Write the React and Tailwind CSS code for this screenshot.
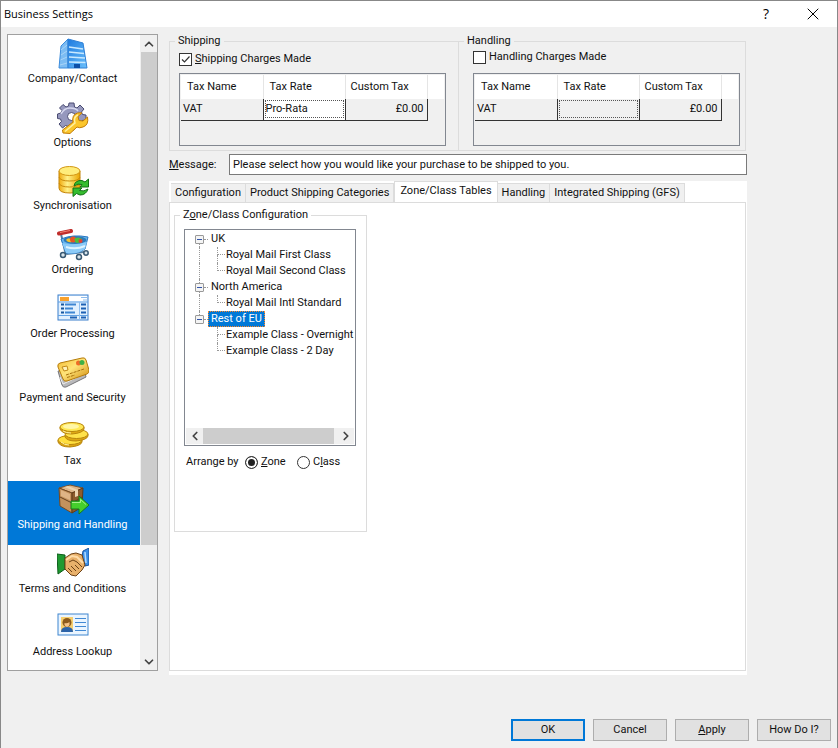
import React, { useState } from 'react';
import { X, ChevronUp, ChevronDown, ChevronLeft, ChevronRight } from 'lucide-react';

const BuildingIcon = () => (
  <svg viewBox="0 0 32 32" className="w-8 h-8">
    <defs>
      <linearGradient id="bldFront" x1="0" y1="0" x2="1" y2="1">
        <stop offset="0" stopColor="#1f7be0" />
        <stop offset="1" stopColor="#6cc0fb" />
      </linearGradient>
    </defs>
    <path d="M2 30 L4 8 L11 1 L11 30 Z" fill="#7cbcf3" stroke="#3d8ddd" strokeWidth="1" />
    <path d="M11 1 L26 5 L30 30 L11 30 Z" fill="url(#bldFront)" stroke="#2f80d6" strokeWidth="1" />
    <path d="M12 9 L26 11 M12 14 L27 15.500 M12 19 L28 20 M12 24 L28.500 24.500" stroke="#c9e9ff" strokeWidth="1.500" />
    <path d="M4 12 L10 7 M4 17 L10 13 M3.500 22 L10 19 M3 27 L10 25" stroke="#a9d4f8" strokeWidth="1" />
    <rect x="17" y="26" width="6" height="4" fill="#0d4fa8" />
  </svg>
);

const OptionsIcon = () => (
  <svg viewBox="0 0 32 32" className="w-8 h-8">
    <g fill="#9698bd" stroke="#4a4b72" strokeWidth="1">
      <path d="M12 1 L17 1 L17.500 5 L20 6 L23 3 L27 7 L24.500 10 L25.500 12.500 L29 13 L29 18 L25 18.500 L23 22 L20 24 L17.500 25 L17 28 L12 28 L11 24.500 L8.500 23.500 L5.500 26 L2 22 L4.500 19.500 L3.500 17 L0.500 16.500 L0.500 12 L4 11 L5 8.500 L2.500 6 L6 2.500 L9 5 L11.500 4 Z" />
      <circle cx="14.500" cy="14.500" r="4" fill="#fff" />
    </g>
    <path d="M4 12 Q7 6 13 6 Q19 6 21 9" fill="none" stroke="#d6d8ef" strokeWidth="1.500" />
    <path d="M6 31 L5.500 28 L16 20 Q14.500 13 20.500 11 Q23 10.500 25 11 L21 14.500 L22 18.500 L26 19 L30.500 15 Q32 23 26 25 Q22.500 26.500 20 25 L13 31.500 Z" fill="#fbc62c" stroke="#c17c08" strokeWidth="1" />
    <path d="M8 29.500 L18 21 Q16 15 21 13" fill="none" stroke="#fff0a0" strokeWidth="1.500" />
  </svg>
);

const SyncIcon = () => (
  <svg viewBox="0 0 32 32" className="w-8 h-8">
    <defs>
      <linearGradient id="dbGold" x1="0" x2="1">
        <stop offset="0" stopColor="#f0a80d" />
        <stop offset="0.400" stopColor="#fff189" />
        <stop offset="1" stopColor="#eaa500" />
      </linearGradient>
    </defs>
    <path d="M2 6 V23 Q2 28 13 28 Q23 28 23 23 V6 Z" fill="url(#dbGold)" stroke="#c48408" strokeWidth="1" />
    <path d="M2 12 Q3 16 12.500 16 Q22 16 23 12 M2 18 Q3 22 12.500 22 Q22 22 23 18" fill="none" stroke="#c98b0c" strokeWidth="1" />
    <ellipse cx="12.500" cy="6" rx="10.500" ry="4.500" fill="#ffed7b" stroke="#d29613" strokeWidth="1" />
    <path d="M17 21 Q18 15 25 15.500 L28 17 L31.500 14 L31.500 22 L23 22 L25 19.500 Q21 18 17 21 Z" fill="#35bd2f" stroke="#127016" strokeWidth="1" />
    <path d="M31 24 Q29 30 23 30 L19.500 28.500 L16 31.500 L16 23 L25 23 L22.500 25.500 Q27 27 31 24 Z" fill="#35bd2f" stroke="#127016" strokeWidth="1" />
  </svg>
);

const CartIcon = () => (
  <svg viewBox="0 0 32 32" className="w-8 h-8">
    <path d="M4 5 L8 22 L10 25 L27 23" fill="none" stroke="#567d9e" strokeWidth="2" />
    <path d="M2 4.500 L14 2" stroke="#c02e2b" strokeWidth="4" strokeLinecap="round" />
    <path d="M3 3.500 L13 1.500" stroke="#f28273" strokeWidth="1" />
    <path d="M4 10 Q16 5 31 8 L28 20 Q20 26 9 24 Z" fill="#69b6ee" stroke="#2876c0" strokeWidth="1" />
    <ellipse cx="18" cy="11" rx="11.500" ry="4" fill="#2e7ab8" />
    <path d="M9 11 Q11 8 14 10 L15 13 Q11 14 9 11 Z" fill="#f5c22b" />
    <circle cx="16" cy="10.500" r="3" fill="#e65425" />
    <path d="M17 10 Q21 7 25 10 Q25 14 19 14 Z" fill="#50bd3a" />
    <circle cx="23.500" cy="12" r="2" fill="#e73f2f" />
    <path d="M5 14 Q17 17 30 13 L28 20 Q20 26 9 24 Z" fill="#8ccbf8" />
    <path d="M9 18 Q19 21 28 17" stroke="#dff4ff" strokeWidth="2" fill="none" />
    <g fill="#d8e4eb" stroke="#385872" strokeWidth="1.500">
      <circle cx="6" cy="26" r="2.500" />
      <circle cx="22" cy="28" r="2.500" />
      <circle cx="29" cy="24" r="2.200" />
    </g>
  </svg>
);

const OrderFormIcon = () => (
  <svg viewBox="0 0 32 32" className="w-8 h-8">
    <rect x="1" y="2" width="30" height="25" fill="#e1f0fe" stroke="#3a7fcc" strokeWidth="1" />
    <rect x="2" y="3" width="28" height="5" fill="#fff" />
    <rect x="3" y="4" width="9" height="4" fill="#f8a12d" />
    <path d="M1 9 H31 M1 22.500 H31" stroke="#62a2e4" strokeWidth="1" />
    <path d="M24 4.500 H30 M26 7 H30" stroke="#8dbcec" strokeWidth="1" />
    <path d="M4 11.500 H7 M4 15.500 H7 M4 19.500 H7" stroke="#15569f" strokeWidth="2" />
    <path d="M8 11.500 H19 M8 15.500 H16 M8 19.500 H18" stroke="#3e86d2" strokeWidth="2" />
    <path d="M22.500 9 V27" stroke="#8fbff0" strokeWidth="1" />
    <path d="M24 11.500 H29 M24 15.500 H29 M24 19.500 H29 M13 24.500 H20 M24 24.500 H29" stroke="#1c60b4" strokeWidth="2" />
  </svg>
);

const CardsIcon = () => (
  <svg viewBox="0 0 32 32" className="w-8 h-8">
    <defs>
      <linearGradient id="cardGold" x1="0" y1="0" x2="1" y2="1">
        <stop offset="0" stopColor="#f3b92c" />
        <stop offset="0.450" stopColor="#ffe47a" />
        <stop offset="1" stopColor="#cf8806" />
      </linearGradient>
    </defs>
    <path d="M1 14 L5 28 Q6 31 9 30 L29 20 L27 12 Z" fill="#b9b9bb" stroke="#77777a" strokeWidth="1" />
    <path d="M3 20 L6 27 L27 17" fill="none" stroke="#ececee" strokeWidth="1" />
    <path d="M1 10 Q0 7 3 6 L25 1 Q28 0 29 3 L32 13 Q32.500 16 30 17 L10 24 Q7 25 6 22 Z" fill="url(#cardGold)" stroke="#b57b0a" strokeWidth="1" />
    <circle cx="21.500" cy="6" r="2.500" fill="#ef6b27" />
    <circle cx="25" cy="5.500" r="2.500" fill="#3eb146" />
    <path d="M5 10 L10 9 L11 13 L7 14 Z" fill="#fff2b9" stroke="#c18817" strokeWidth="1" />
    <path d="M9 18 L27 12 M10 20.500 L18 18" stroke="#a8720e" strokeWidth="1" strokeDasharray="3 1" />
  </svg>
);

const CoinsIcon = () => (
  <svg viewBox="0 0 32 32" className="w-8 h-8">
    <g stroke="#b9850c" strokeWidth="1">
      <path d="M1 20 V22 Q3 27 13 27 Q24 26 25 22 V20 Z" fill="#dba310" />
      <ellipse cx="13" cy="20" rx="12" ry="4.500" fill="#ffdf3e" />
      <path d="M8 15 V17 Q10 21 19 21 Q30 20 31 16 V14 Z" fill="#dca512" />
      <ellipse cx="19.500" cy="14" rx="11.500" ry="4.500" fill="#ffe24a" />
      <path d="M3 7 V9 Q5 14 15 14 Q26 13 27 9 V7 Z" fill="#dfa915" />
      <ellipse cx="15" cy="7" rx="12" ry="4.500" fill="#ffe856" />
    </g>
    <ellipse cx="14" cy="6.500" rx="8" ry="2.500" fill="#fff6a6" />
    <path d="M4 22 Q7 25 12 25 M6 11 Q9 13 14 13" stroke="#fff0a0" strokeWidth="1" fill="none" />
  </svg>
);

const ParcelIcon = () => (
  <svg viewBox="0 0 32 32" className="w-8 h-8">
    <path d="M2 4 L13 1 L26 4 L15 9 Z" fill="#dcb489" stroke="#7c5229" strokeWidth="1" />
    <path d="M2 4 L15 9 L15 29 L3 22 Z" fill="#c4925d" stroke="#74481f" strokeWidth="1" />
    <path d="M15 9 L26 4 L25 23 L15 29 Z" fill="#8d5a2d" stroke="#613a17" strokeWidth="1" />
    <path d="M7 3 L18 7 L18 13 L21 12 L21 6 L11 2 Z" fill="#ecd3ae" />
    <path d="M3 13 L15 19 L25 13" fill="none" stroke="#64401f" strokeWidth="1" />
    <path d="M4 6 L13 10 L13 16 L4 12 Z" fill="#dfb486" />
    <path d="M14 17 H22 V12 L32 21 L22 30 V25 H14 Z" fill="#45cf2c" stroke="#16791c" strokeWidth="1" />
    <path d="M15 18.500 H23.500 V15.500 L29 20.500" fill="none" stroke="#a5f28b" strokeWidth="1" />
  </svg>
);

const HandshakeIcon = () => (
  <svg viewBox="0 0 32 32" className="w-8 h-8">
    <path d="M0 6 L8 7 L8 21 L1 26 Z" fill="#1f9a31" stroke="#0b5c19" strokeWidth="1" />
    <path d="M32 0 L26 3 L25 9 L28 18 L32 17 Z" fill="#3b8fe8" stroke="#17509a" strokeWidth="1" />
    <path d="M28 4 L29 15" stroke="#b4dcff" strokeWidth="1.500" />
    <path d="M8 10 L14 6 L19 5 L25 7 L28 17 L25 22 L19 28 L14 27 L8 21 Z" fill="#e8b06a" stroke="#6c4116" strokeWidth="1" />
    <path d="M9 12 L15 8 L20 9 L26 15" fill="none" stroke="#ffdca8" strokeWidth="2" />
    <path d="M12 14 L16 12 L20 14 L25 19 M11 20 L15 24 M14 18 L19 23 M18 17 L22 21" fill="none" stroke="#6c4116" strokeWidth="1" />
  </svg>
);

const AddressIcon = () => (
  <svg viewBox="0 0 32 32" className="w-8 h-8">
    <rect x="1" y="3" width="30" height="21" fill="#eaf5ff" stroke="#3f86d0" strokeWidth="1" />
    <rect x="4" y="6" width="12" height="15" fill="#f6cf6f" />
    <path d="M4 21 Q4 16 10 16 Q16 16 16 21 Z" fill="#2c63a8" />
    <circle cx="10" cy="11.500" r="4.500" fill="#8c5a1c" />
    <path d="M7.500 12 Q10 13 12.500 11 V14 Q10 18 7.500 14 Z" fill="#f5c388" />
    <path d="M18 7.500 H29 M18 11.500 H29 M18 15.500 H29 M18 19.500 H29" stroke="#4189d4" strokeWidth="1" />
  </svg>
);

const SECTIONS = [
  { id: 'company', name: 'Company/Contact', Icon: BuildingIcon },
  { id: 'options', name: 'Options', Icon: OptionsIcon },
  { id: 'sync', name: 'Synchronisation', Icon: SyncIcon },
  { id: 'ordering', name: 'Ordering', Icon: CartIcon },
  { id: 'processing', name: 'Order Processing', Icon: OrderFormIcon },
  { id: 'payment', name: 'Payment and Security', Icon: CardsIcon },
  { id: 'tax', name: 'Tax', Icon: CoinsIcon },
  { id: 'shipping', name: 'Shipping and Handling', Icon: ParcelIcon },
  { id: 'terms', name: 'Terms and Conditions', Icon: HandshakeIcon },
  { id: 'address', name: 'Address Lookup', Icon: AddressIcon },
];

const TABS = [
  { id: 'config', name: 'Configuration' },
  { id: 'categories', name: 'Product Shipping Categories' },
  { id: 'zones', name: 'Zone/Class Tables' },
  { id: 'handling', name: 'Handling' },
  { id: 'gfs', name: 'Integrated Shipping (GFS)' },
];

const ZONES = [
  { name: 'UK', classes: ['Royal Mail First Class', 'Royal Mail Second Class'] },
  { name: 'North America', classes: ['Royal Mail Intl Standard'] },
  { name: 'Rest of EU', classes: ['Example Class - Overnight', 'Example Class - 2 Day'] },
];

function CheckBox({ id, checked, onChange, children }) {
  return (
    <div className="flex items-center gap-[3px] h-4">
      <span className="grid w-[13px] h-[13px]">
        <input
          id={id}
          type="checkbox"
          checked={checked}
          onChange={onChange}
          className="col-start-1 row-start-1 appearance-none w-[13px] h-[13px] border border-[#333] bg-white"
        />
        {checked && (
          <svg viewBox="0 0 13 13" className="col-start-1 row-start-1 pointer-events-none">
            <path d="M3 6.500 L5.500 9 L10.500 3.500" fill="none" stroke="#333" strokeWidth="1.200" />
          </svg>
        )}
      </span>
      <label htmlFor={id}>{children}</label>
    </div>
  );
}

function TaxTable({ rate, label }) {
  return (
    <div className="border border-[#828790] h-[73px] p-px">
      <table aria-label={label} className="w-full table-fixed border-collapse">
        <colgroup>
          <col className="w-[82px]" />
          <col className="w-[82px]" />
          <col className="w-[82px]" />
          <col />
        </colgroup>
        <thead>
          <tr className="h-6 bg-white text-left">
            <th className="font-normal pl-1.5 border-r border-[#e5e5e5]">Tax Name</th>
            <th className="font-normal pl-1.5 border-r border-[#e5e5e5]">Tax Rate</th>
            <th className="font-normal pl-[5px] border-r border-[#e5e5e5]">Custom Tax</th>
            <td />
          </tr>
        </thead>
        <tbody>
          <tr className="h-[21px]">
            <td className="pl-0.5 border-r border-b border-[#333]">VAT</td>
            <td className={rate ? 'p-px border-r border-b border-[#333] bg-white' : 'p-px border-r border-b border-[#333]'}>
              <div className="h-[18px] leading-4 border border-dotted border-[#555]">{rate}</div>
            </td>
            <td className="pr-[3px] text-right border-r border-b border-[#333]">£0.00</td>
            <td />
          </tr>
        </tbody>
      </table>
    </div>
  );
}

function ZoneTree() {
  const [selected, setSelected] = useState('Rest of EU');

  return (
    <ul role="tree" aria-label="Zones" className="flex-1 min-w-0 overflow-hidden pl-2.5">
      {ZONES.map((zone, i) => {
        const first = i === 0;
        const last = i === ZONES.length - 1;
        return (
          <li key={zone.name} role="treeitem" aria-expanded="true" aria-selected={selected === zone.name}>
            <div className="flex items-center h-4">
              <span className="w-[9px] h-4 flex flex-col items-center">
                <span className={first ? 'flex-1' : 'flex-1 border-l border-dotted border-[#999]'} />
                <button aria-label={`Collapse ${zone.name}`} className="w-[9px] h-[9px] flex items-center justify-center border border-[#999] rounded-[1px] bg-[#f4f4f4]">
                  <span className="w-[5px] h-px bg-[#3355aa]" />
                </button>
                <span className={last ? 'flex-1' : 'flex-1 border-l border-dotted border-[#999]'} />
              </span>
              <span className="w-1 border-t border-dotted border-[#999]" />
              <button
                onClick={() => setSelected(zone.name)}
                className={selected === zone.name
                  ? 'h-4 px-[3px] leading-4 bg-[#0078d7] text-white outline-1 outline-dotted -outline-offset-1 outline-[#ff8728]'
                  : 'h-4 px-[3px] leading-4'}
              >
                {zone.name}
              </button>
            </div>
            <ul role="group">
              {zone.classes.map((name, n) => (
                <li key={name} role="treeitem" aria-selected="false" className="flex items-center h-4 whitespace-nowrap">
                  <span className={last ? 'ml-1 w-[18px] h-4 shrink-0' : 'ml-1 w-[18px] h-4 shrink-0 border-l border-dotted border-[#999]'} />
                  <span className="w-2 h-4 shrink-0 flex flex-col">
                    <span className="h-2 border-l border-b border-dotted border-[#999]" />
                    {n < zone.classes.length - 1 && <span className="h-2 border-l border-dotted border-[#999]" />}
                  </span>
                  <span className="pl-px">{name}</span>
                </li>
              ))}
            </ul>
          </li>
        );
      })}
    </ul>
  );
}

export default function App() {
  const [section, setSection] = useState('shipping');
  const [tab, setTab] = useState('zones');
  const [shipCharges, setShipCharges] = useState(true);
  const [handCharges, setHandCharges] = useState(false);
  const [arrange, setArrange] = useState('zone');
  const [message, setMessage] = useState('Please select how you would like your purchase to be shipped to you.');

  const dialogButton = 'w-[74px] h-[22px] bg-[#e1e1e1] border border-[#adadad]';
  const radio = 'appearance-none w-[13px] h-[13px] rounded-full border border-[#333] bg-white checked:bg-[#222] checked:shadow-[inset_0_0_0_2px_white]';

  return (
    <div className="min-h-screen flex flex-col bg-[#f0f0f0] border-t border-x border-[#888] text-[#111] text-[11px] leading-4 font-['Roboto','Liberation_Sans',sans-serif]">
      {/* Title bar */}
      <header className="h-[26px] shrink-0 flex items-center bg-white pl-[3px] text-black">
        <h1 className="flex-1 font-['Open_Sans','Noto_Sans',sans-serif]">Business Settings</h1>
        <button aria-label="Help" className="w-[46px] h-full text-[14px] font-['Open_Sans',sans-serif]">?</button>
        <button aria-label="Close" className="w-12 h-full flex items-center justify-center">
          <X size={20} strokeWidth={1.2} />
        </button>
      </header>

      <div className="flex-1 flex pl-1.5 pt-1.5">
        {/* Section list */}
        <nav className="w-[151px] shrink-0 flex border border-[#a0a0a0] bg-white mt-px mb-1">
          <div className="flex-1 flex flex-col -mb-0.5">
            {SECTIONS.map(({ id, name, Icon }) => (
              <button
                key={id}
                onClick={() => setSection(id)}
                className={section === id
                  ? 'flex-1 pt-[3px] pr-[3px] flex flex-col items-center bg-[#0078d7] text-white'
                  : 'flex-1 pt-[3px] pr-[3px] flex flex-col items-center'}
              >
                <Icon />
                <span className="mt-px">{name}</span>
              </button>
            ))}
          </div>
          <div className="w-[17px] pl-px flex flex-col bg-[#f0f0f0] text-[#444]">
            <button aria-label="Scroll up" className="h-[17px] flex items-center justify-center">
              <ChevronUp size={14} strokeWidth={3} />
            </button>
            <div className="flex-1">
              <div className="h-[82%] bg-[#cdcdcd]" />
            </div>
            <button aria-label="Scroll down" className="h-[17px] flex items-center justify-center">
              <ChevronDown size={14} strokeWidth={3} />
            </button>
          </div>
        </nav>

        <main className="flex-1 min-w-0 flex flex-col ml-[11px] mr-[90px]">
          {/* Charges */}
          <div className="flex mr-px">
            <fieldset className="flex-1 min-w-0 border border-[#dcdcdc] pl-[9px] pr-3 pb-1">
              <legend className="-ml-1 px-[3px]">Shipping</legend>
              <div className="pt-0.5 pb-1.5">
                <CheckBox id="ship-charges" checked={shipCharges} onChange={(e) => setShipCharges(e.target.checked)}>
                  <u>S</u>hipping Charges Made
                </CheckBox>
              </div>
              <TaxTable label="Shipping tax" rate="Pro-Rata" />
            </fieldset>
            <fieldset className="flex-1 min-w-0 -ml-px border border-[#dcdcdc] pl-[14px] pr-[5px] pb-1">
              <legend className="-ml-[9px] px-[3px]">Handling</legend>
              <div className="pb-2">
                <CheckBox id="hand-charges" checked={handCharges} onChange={(e) => setHandCharges(e.target.checked)}>
                  Handlin<u>g</u> Charges Made
                </CheckBox>
              </div>
              <TaxTable label="Handling tax" rate="" />
            </fieldset>
          </div>

          <div className="flex items-center mt-[3px]">
            <label htmlFor="message" className="w-[60px]"><u>M</u>essage:</label>
            <input
              id="message"
              type="text"
              value={message}
              onChange={(e) => setMessage(e.target.value)}
              className="flex-1 min-w-0 h-[21px] px-[3px] bg-white border border-[#7a7a7a]"
            />
          </div>

          {/* Tabs */}
          <div className="flex-1 flex flex-col mt-1.5 bg-white pr-px pb-1">
            <div role="tablist" className="flex items-end h-[21px] pl-0.5">
              {TABS.map(({ id, name }) => (
                <button
                  key={id}
                  role="tab"
                  aria-selected={tab === id}
                  onClick={() => setTab(id)}
                  className={tab === id
                    ? 'h-[21px] px-[5px] pb-0.5 bg-white border-t border-x border-[#dcdcdc] whitespace-nowrap'
                    : 'h-[19px] px-1 bg-[#f0f0f0] border-t border-r border-[#dcdcdc] whitespace-nowrap'}
                >
                  {name}
                </button>
              ))}
            </div>
            <div role="tabpanel" className="flex-1 border border-[#dcdcdc] px-1 pt-1">
              <fieldset className="w-[193px] min-w-0 h-[325px] border border-[#dcdcdc] pl-[9px] pr-2.5">
                <legend className="-ml-1 px-[3px]">Z<u>o</u>ne/Class Configuration</legend>
                <div className="h-[217px] mt-1.5 flex flex-col border border-[#828790] bg-white py-px">
                  <ZoneTree />
                  <div className="h-4 mx-px flex bg-[#f0f0f0] text-[#444]">
                    <button aria-label="Scroll left" className="w-[17px] flex items-center justify-center">
                      <ChevronLeft size={14} strokeWidth={3} />
                    </button>
                    <div className="flex-1">
                      <div className="h-full w-[98%] bg-[#cdcdcd]" />
                    </div>
                    <button aria-label="Scroll right" className="w-[17px] flex items-center justify-center">
                      <ChevronRight size={14} strokeWidth={3} />
                    </button>
                  </div>
                </div>
                <div className="flex items-center mt-2 pl-0.5">
                  <span className="w-[59px]">Arrange by</span>
                  <label className="flex items-center gap-[3px] w-[52px]">
                    <input type="radio" name="arrange" checked={arrange === 'zone'} onChange={() => setArrange('zone')} className={radio} />
                    <span><u>Z</u>one</span>
                  </label>
                  <label className="flex items-center gap-[3px]">
                    <input type="radio" name="arrange" checked={arrange === 'class'} onChange={() => setArrange('class')} className={radio} />
                    <span>C<u>l</u>ass</span>
                  </label>
                </div>
              </fieldset>
            </div>
          </div>
        </main>
      </div>

      <footer className="flex justify-end gap-2 pt-11 pb-[7px] pr-1.5">
        <button className="w-[74px] h-[22px] bg-[#e1e1e1] border-2 border-[#0078d7]">OK</button>
        <button className={dialogButton}>Cancel</button>
        <button className={dialogButton}><u>A</u>pply</button>
        <button className={dialogButton}>How Do I?</button>
      </footer>
    </div>
  );
}
